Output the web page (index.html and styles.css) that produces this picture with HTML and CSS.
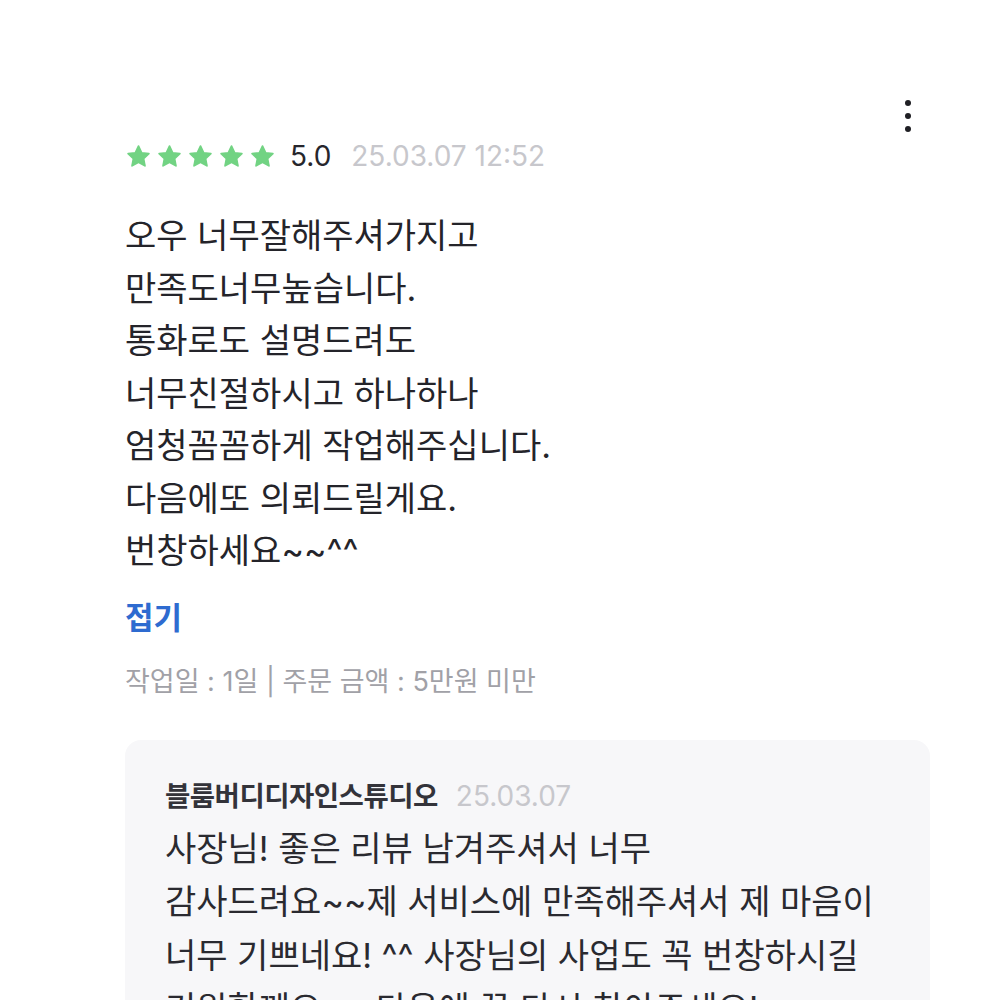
FILE: index.html
```html
<!DOCTYPE html>
<html lang="ko">
<head>
  <meta charset="UTF-8">
  <meta name="viewport" content="width=device-width, initial-scale=1.0">
  <title>리뷰</title>
  <link rel="stylesheet" href="styles.css">
</head>
<body>
  <div class="review">
    <div class="toolbar">
      <button class="more" type="button" aria-label="더보기">
        <svg width="44" height="44" viewBox="0 0 44 44">
          <circle cx="22" cy="9" r="3"/>
          <circle cx="22" cy="22" r="3"/>
          <circle cx="22" cy="35" r="3"/>
        </svg>
      </button>
    </div>

    <div class="rating">
      <div class="stars">
        <svg viewBox="0 0 24 24"><path d="M12 2.8l2.8 5.9 6.4.8-4.7 4.4 1.2 6.4L12 17.1l-5.7 3.2 1.2-6.4-4.7-4.4 6.4-.8z"/></svg>
        <svg viewBox="0 0 24 24"><path d="M12 2.8l2.8 5.9 6.4.8-4.7 4.4 1.2 6.4L12 17.1l-5.7 3.2 1.2-6.4-4.7-4.4 6.4-.8z"/></svg>
        <svg viewBox="0 0 24 24"><path d="M12 2.8l2.8 5.9 6.4.8-4.7 4.4 1.2 6.4L12 17.1l-5.7 3.2 1.2-6.4-4.7-4.4 6.4-.8z"/></svg>
        <svg viewBox="0 0 24 24"><path d="M12 2.8l2.8 5.9 6.4.8-4.7 4.4 1.2 6.4L12 17.1l-5.7 3.2 1.2-6.4-4.7-4.4 6.4-.8z"/></svg>
        <svg viewBox="0 0 24 24"><path d="M12 2.8l2.8 5.9 6.4.8-4.7 4.4 1.2 6.4L12 17.1l-5.7 3.2 1.2-6.4-4.7-4.4 6.4-.8z"/></svg>
      </div>
      <span class="score">5.0</span>
      <span class="date">25.03.07 12:52</span>
    </div>

    <p class="content">오우 너무잘해주셔가지고<br>만족도너무높습니다.<br>통화로도 설명드려도<br>너무친절하시고 하나하나<br>엄청꼼꼼하게 작업해주십니다.<br>다음에또 의뢰드릴게요.<br>번창하세요~~^^</p>

    <button class="fold" type="button">접기</button>

    <div class="meta">작업일 : 1일 | 주문 금액 : 5만원 미만</div>

    <div class="reply">
      <div class="reply-head">
        <span class="reply-name">블룸버디디자인스튜디오</span>
        <span class="reply-date">25.03.07</span>
      </div>
      <p class="reply-text">사장님! 좋은 리뷰 남겨주셔서 너무<br>감사드려요~~제 서비스에 만족해주셔서 제 마음이<br>너무 기쁘네요! ^^ 사장님의 사업도 꼭 번창하시길<br>기원할께요~~ 다음에 꼭 다시 찾아주세요!</p>
    </div>
  </div>
</body>
</html>
```

FILE: styles.css
```css
body {
  font-family: Inter, "Noto Sans CJK KR", sans-serif;
  background-color: #ffffff;
  color: #1f1f24;
  margin: 0;
}

.review {
  padding: 94px 70px 0 125px;
}

.toolbar {
  display: flex;
  justify-content: flex-end;
}

.more {
  padding: 0;
  border: none;
  background: none;
  display: block;
  cursor: pointer;
}

.more svg {
  display: block;
  fill: #1f1f24;
}

.rating {
  display: flex;
  align-items: center;
  height: 36px;
}

.stars {
  display: flex;
  gap: 4px;
  margin-right: 14px;
}

.stars svg {
  width: 27px;
  height: 27px;
  fill: #72d383;
  stroke: #72d383;
  stroke-width: 1.6;
  stroke-linejoin: round;
}

.score {
  font-size: 28px;
  color: #26262c;
  margin-right: 20px;
}

.date {
  font-size: 28px;
  color: #c7c7cc;
}

.content {
  margin: 36px 0 0;
  font-size: 34px;
  line-height: 52.5px;
  color: #24242a;
}

.fold {
  display: block;
  margin-top: 20px;
  padding: 0;
  border: none;
  background: none;
  font-family: inherit;
  font-size: 31px;
  font-weight: 700;
  line-height: 40px;
  color: #2e6bd0;
  cursor: pointer;
}

.meta {
  margin-top: 26px;
  font-size: 27px;
  line-height: 36px;
  color: #a1a1a7;
}

.reply {
  margin-top: 40px;
  background-color: #f7f7f9;
  border-radius: 16px;
  padding: 38px 40px 40px;
}

.reply-head {
  display: flex;
  align-items: baseline;
  gap: 18px;
  line-height: 36px;
}

.reply-name {
  font-size: 27.5px;
  font-weight: 700;
  color: #33333a;
  letter-spacing: -0.5px;
}

.reply-date {
  font-size: 28px;
  color: #c7c7cc;
}

.reply-text {
  margin: 8px 0 0;
  font-size: 34px;
  line-height: 53.5px;
  color: #2a2a30;
}
```
